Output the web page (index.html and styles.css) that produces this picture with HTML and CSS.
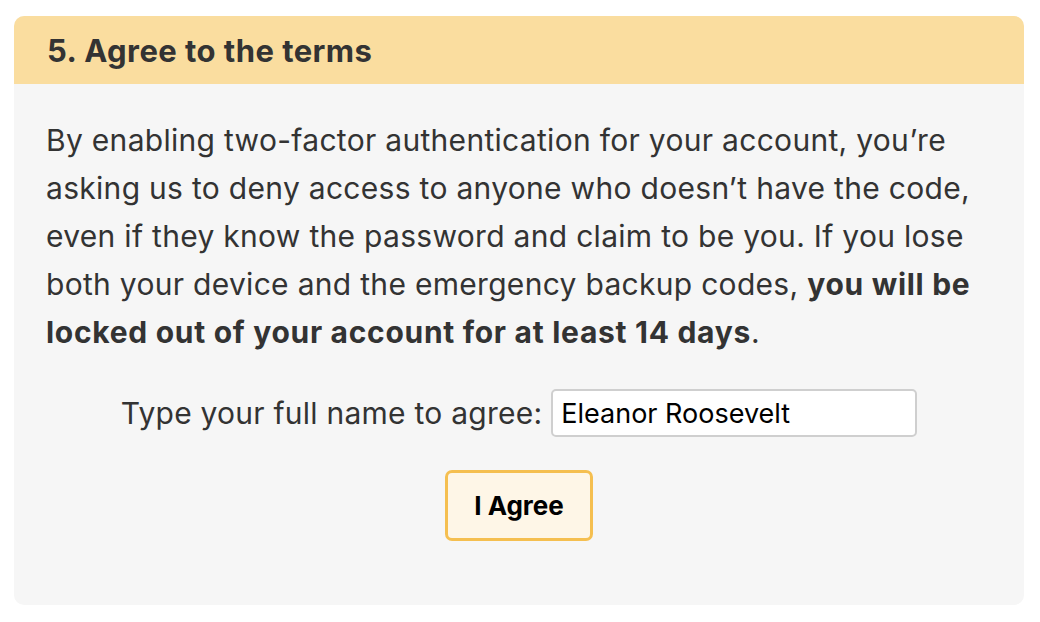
FILE: index.html
```html
<!DOCTYPE html>
<html lang="en">
<head>
<meta charset="utf-8">
<title>Agree to the terms</title>
<link rel="stylesheet" href="styles.css">
</head>
<body>
<section class="card">
  <h2 class="card-header">5. Agree to the terms</h2>
  <div class="card-body">
    <p class="terms">By enabling two-factor authentication for your account, you’re asking us to deny access to anyone who doesn’t have the code, even if they know the password and claim to be you. If you lose both your device and the emergency backup codes, <strong>you will be locked out of your account for at least 14 days</strong>.</p>
    <div class="agree-row">
      <label class="agree-label" for="fullname">Type your full name to agree:</label>
      <input class="agree-input" id="fullname" type="text" value="Eleanor Roosevelt">
    </div>
    <div class="actions">
      <button class="agree-btn" type="button">I Agree</button>
    </div>
  </div>
</section>
</body>
</html>
```

FILE: styles.css
```css
* { box-sizing: border-box; }
html, body { margin: 0; padding: 0; background: #ffffff; }
body {
  font-family: Inter, "Noto Sans", "Liberation Sans", sans-serif;
  color: #333333;
  padding: 16px 16px 16px 14px;
}
.card {
  width: 1010px;
  background: #f6f6f6;
  border-radius: 10px;
  overflow: hidden;
}
.card-header {
  margin: 0;
  background: #fadd9f;
  height: 68px;
  display: flex;
  align-items: center;
  padding: 0 33px;
  font-size: 31px;
  letter-spacing: 0.45px;
  font-weight: 700;
  color: #333333;
}
.card-body {
  padding: 32px 32px 64px 32px;
}
.terms {
  margin: 0;
  font-size: 30px;
  letter-spacing: 0.3px;
  line-height: 48px;
}
.terms strong {
  font-weight: 700;
  letter-spacing: 0.7px;
}
.agree-row {
  margin-top: 33px;
  display: flex;
  justify-content: center;
  align-items: center;
  gap: 9px;
}
.agree-label {
  font-size: 30px;
  letter-spacing: 0.24px;
  color: #333333;
}
.agree-input {
  width: 366px;
  height: 48px;
  border: 2px solid #cfcfcf;
  border-radius: 5px;
  background: #ffffff;
  padding: 0 8px;
  font-family: inherit;
  font-size: 27px;
  color: #000000;
}
.actions {
  margin-top: 33px;
  display: flex;
  justify-content: center;
}
.agree-btn {
  width: 148px;
  height: 71px;
  border: 3px solid #f5bf50;
  border-radius: 7px;
  background: #fef6e7;
  font-family: inherit;
  font-size: 26px;
  font-weight: 700;
  color: #000000;
}
```
